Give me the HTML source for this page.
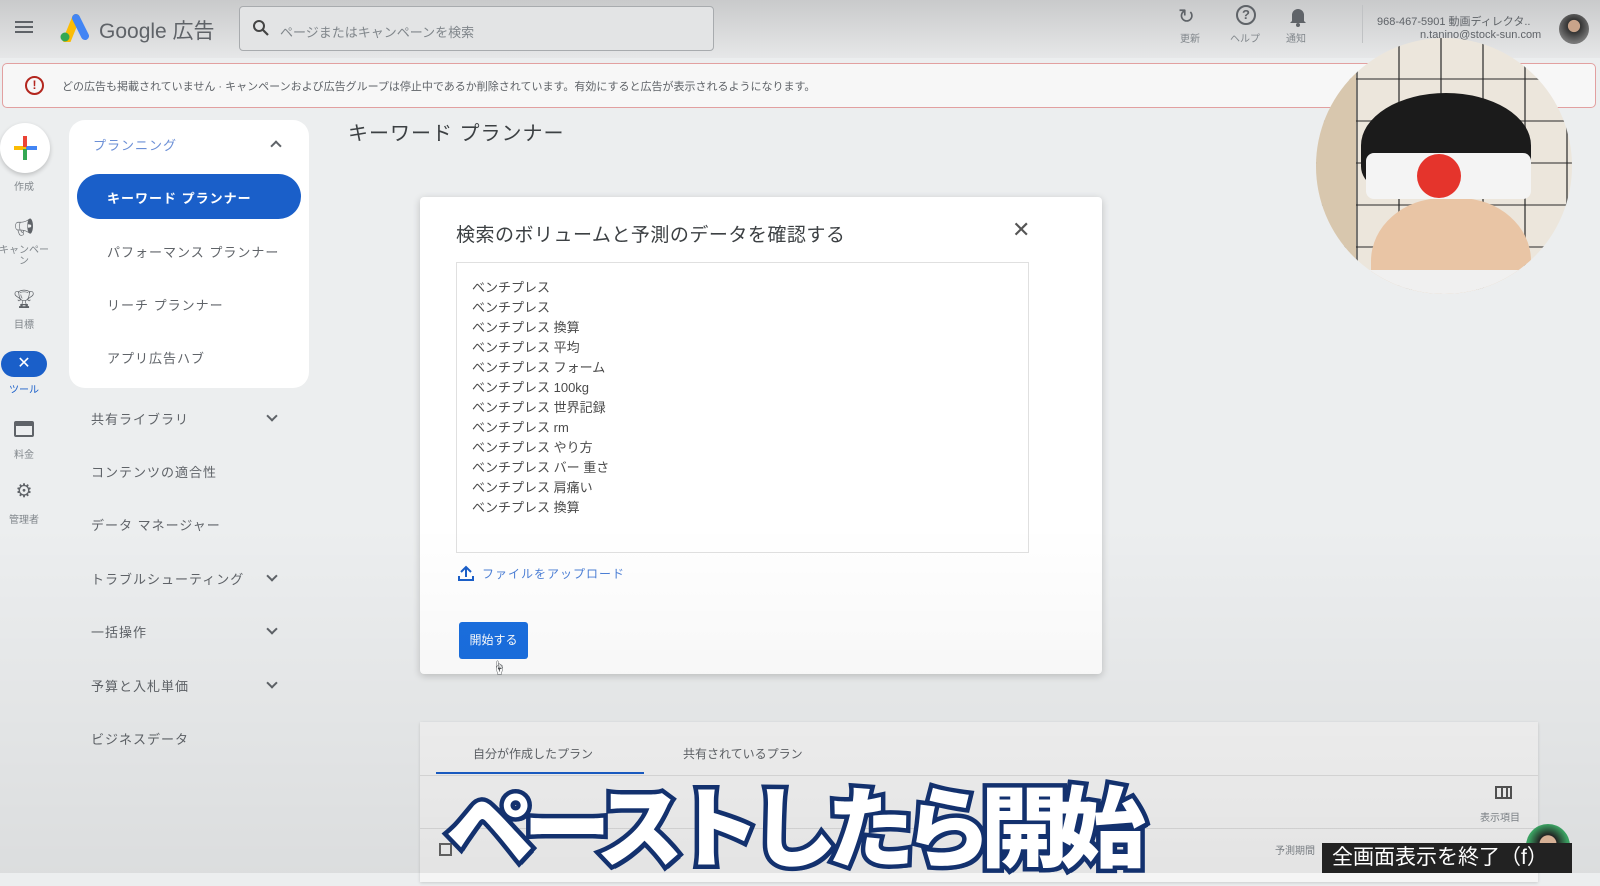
<!DOCTYPE html>
<html><head><meta charset="utf-8">
<style>
*{box-sizing:border-box;margin:0;padding:0}
body{width:1600px;height:873px;overflow:hidden;position:relative;background:#eceeef;font-family:"Liberation Sans","Noto Sans CJK JP",sans-serif;color:#3c4043}
.abs{position:absolute}
.hdr{left:0;top:0;width:1600px;height:58px;background:linear-gradient(#c9cacb,#e6e7e8)}
.vign{left:0;top:0;width:1600px;height:873px;background:linear-gradient(180deg,rgba(0,0,0,0) 60%,rgba(0,0,0,.07) 100%);pointer-events:none}
.menu div{position:absolute;left:91px;font-size:13px;color:#5f6368;letter-spacing:1px}
.chev{position:absolute;left:268px;width:8px;height:8px;border-right:2px solid #5f6368;border-bottom:2px solid #5f6368;transform:rotate(45deg)}
.rail{position:absolute;width:48px;text-align:center;font-size:10px;color:#80868b}
.kw{font-size:13px;color:#4a4a4a;line-height:20px}
</style></head><body>
<div class="abs hdr"></div>
<div class="abs" style="left:15px;top:21px;width:18px;height:2px;background:#5f6368;box-shadow:0 5px 0 #5f6368,0 10px 0 #5f6368"></div>
<svg class="abs" style="left:57px;top:14px" width="32" height="28" viewBox="0 0 32 28"><path d="M10 26 L19 4" stroke="#fbbc04" stroke-width="8" stroke-linecap="round"/><path d="M19 4 L28 22" stroke="#4285f4" stroke-width="8" stroke-linecap="round"/><circle cx="8" cy="23" r="4.5" fill="#34a853"/></svg>
<div class="abs" style="left:99px;top:15px;font-size:21px;color:#5f6368">Google 広告</div>
<div class="abs" style="left:239px;top:6px;width:475px;height:45px;border:1.5px solid #a8abae;border-radius:4px;background:#e3e4e5"></div>
<svg class="abs" style="left:252px;top:19px" width="18" height="18" viewBox="0 0 18 18"><circle cx="7" cy="7" r="5" fill="none" stroke="#444" stroke-width="2"/><path d="M11 11l5 5" stroke="#444" stroke-width="2.2"/></svg>
<div class="abs" style="left:280px;top:22px;font-size:13px;color:#80868b">ページまたはキャンペーンを検索</div>
<div class="abs" style="left:1178px;top:4px;font-size:20px;color:#5f6368">↻</div>
<div class="abs" style="left:1180px;top:30px;font-size:10px;color:#80868b">更新</div>
<div class="abs" style="left:1236px;top:5px;width:20px;height:20px;border:2px solid #5f6368;border-radius:50%;font-size:13px;text-align:center;line-height:16px;color:#5f6368;font-weight:bold">?</div>
<div class="abs" style="left:1230px;top:30px;font-size:10px;color:#80868b">ヘルプ</div>
<svg class="abs" style="left:1288px;top:5px" width="20" height="22" viewBox="0 0 20 22"><path d="M4 16V10a6 6 0 0112 0v6l2 2H2z" fill="#5f6368"/><circle cx="10" cy="20" r="2" fill="#5f6368"/></svg>
<div class="abs" style="left:1286px;top:30px;font-size:10px;color:#80868b">通知</div>
<div class="abs" style="left:1362px;top:5px;width:1px;height:38px;background:#c0c2c4"></div>
<div class="abs" style="left:1377px;top:13px;font-size:11px;color:#5f6368">968-467-5901 動画ディレクタ..</div>
<div class="abs" style="left:1420px;top:29px;font-size:11px;color:#5f6368">n.tanino@stock-sun.com</div>
<div class="abs" style="left:1559px;top:14px;width:30px;height:30px;border-radius:50%;background:radial-gradient(circle at 50% 40%,#c9a48a 25%,#333 27%,#777 70%)"></div>
<div class="abs" style="left:2px;top:63px;width:1594px;height:45px;border:1.5px solid #e2a0a0;border-radius:5px;background:#f7f7f7"></div>
<div class="abs" style="left:25px;top:76px;width:19px;height:19px;border:2px solid #b3261e;border-radius:50%;color:#b3261e;font-size:12px;font-weight:bold;text-align:center;line-height:15px">!</div>
<div class="abs" style="left:62px;top:78px;font-size:11px;color:#5f6368">どの広告も掲載されていません · キャンペーンおよび広告グループは停止中であるか削除されています。有効にすると広告が表示されるようになります。</div>
<div class="abs" style="left:0;top:123px;width:50px;height:50px;border-radius:50%;background:#fff;box-shadow:0 2px 5px rgba(0,0,0,.2)"></div>
<div class="abs" style="left:14px;top:146px;width:12px;height:4px;background:#fbbc04"></div><div class="abs" style="left:26px;top:146px;width:11px;height:4px;background:#4285f4"></div>
<div class="abs" style="left:23px;top:136px;width:4px;height:11px;background:#ea4335"></div><div class="abs" style="left:23px;top:149px;width:4px;height:11px;background:#34a853"></div>
<div class="rail" style="left:0;top:178px">作成</div>
<div class="rail" style="left:0;top:218px;font-size:17px;color:#5f6368">📢︎</div>
<div class="rail" style="left:-4px;top:245px;width:56px;line-height:11px">キャンペーン</div>
<div class="rail" style="left:0;top:289px;font-size:18px;color:#5f6368">🏆︎</div>
<div class="rail" style="left:0;top:316px">目標</div>
<div class="abs" style="left:1px;top:351px;width:46px;height:26px;border-radius:13px;background:#1a5fc9;color:#fff;text-align:center;font-size:16px;line-height:26px">✕</div>
<div class="rail" style="left:0;top:381px;color:#1a5fc9">ツール</div>
<div class="abs" style="left:14px;top:421px;width:20px;height:16px;border:2px solid #5f6368;border-radius:2px;border-top-width:5px"></div>
<div class="rail" style="left:0;top:446px">料金</div>
<div class="rail" style="left:0;top:480px;font-size:19px;color:#5f6368">⚙</div>
<div class="rail" style="left:0;top:511px">管理者</div>
<div class="abs" style="left:69px;top:120px;width:240px;height:268px;background:#fff;border-radius:16px"></div>
<div class="abs" style="left:93px;top:135px;font-size:13px;color:#6b8fd6;letter-spacing:1px">プランニング</div>
<div class="abs" style="left:272px;top:142px;width:8px;height:8px;border-left:2px solid #5f6368;border-top:2px solid #5f6368;transform:rotate(45deg)"></div>
<div class="abs" style="left:77px;top:174px;width:224px;height:45px;border-radius:23px;background:#1a5fc9"></div>
<div class="abs" style="left:107px;top:188px;font-size:13px;color:#fff;letter-spacing:1px;font-weight:bold">キーワード プランナー</div>
<div class="menu">
<div style="left:107px;top:242px">パフォーマンス プランナー</div>
<div style="left:107px;top:295px">リーチ プランナー</div>
<div style="left:107px;top:348px">アプリ広告ハブ</div>
<div style="top:409px">共有ライブラリ</div>
<div style="top:462px">コンテンツの適合性</div>
<div style="top:515px">データ マネージャー</div>
<div style="top:569px">トラブルシューティング</div>
<div style="top:622px">一括操作</div>
<div style="top:676px">予算と入札単価</div>
<div style="top:729px">ビジネスデータ</div>
</div>
<div class="chev" style="top:412px"></div><div class="chev" style="top:572px"></div><div class="chev" style="top:625px"></div><div class="chev" style="top:679px"></div>
<div class="abs" style="left:348px;top:117px;font-size:20px;color:#3c4043;letter-spacing:1px">キーワード プランナー</div>
<div class="abs" style="left:420px;top:197px;width:682px;height:477px;background:#fff;border-radius:4px;box-shadow:0 2px 8px rgba(0,0,0,.2)"></div>
<div class="abs" style="left:456px;top:220px;font-size:19px;color:#3c4043;letter-spacing:.5px">検索のボリュームと予測のデータを確認する</div>
<div class="abs" style="left:1012px;top:217px;font-size:22px;color:#555">✕</div>
<div class="abs" style="left:456px;top:262px;width:573px;height:291px;border:1px solid #e0e0e0;background:#fff"></div>
<div class="abs kw" style="left:472px;top:278px">ベンチプレス<br>ベンチプレス<br>ベンチプレス 換算<br>ベンチプレス 平均<br>ベンチプレス フォーム<br>ベンチプレス 100kg<br>ベンチプレス 世界記録<br>ベンチプレス rm<br>ベンチプレス やり方<br>ベンチプレス バー 重さ<br>ベンチプレス 肩痛い<br>ベンチプレス 換算</div>
<svg class="abs" style="left:458px;top:564px" width="16" height="18" viewBox="0 0 16 18"><path d="M8 13V3M3 8l5-5 5 5M1 12v4h14v-4" fill="none" stroke="#1a5fc9" stroke-width="2"/></svg>
<div class="abs" style="left:482px;top:565px;font-size:12px;color:#4c7fd6;letter-spacing:1px">ファイルをアップロード</div>
<div class="abs" style="left:459px;top:622px;width:69px;height:37px;background:#1a6fe0;border-radius:3px;color:#fff;font-size:12px;text-align:center;line-height:37px">開始する</div>
<div class="abs" style="left:492px;top:658px;font-size:14px">☝</div>
<div class="abs" style="left:1316px;top:38px;width:256px;height:256px;border-radius:50%;overflow:hidden;background:#ece6dc">
<div class="abs" style="left:0;top:0;width:256px;height:256px;background:repeating-linear-gradient(90deg,transparent 0 40px,rgba(40,40,40,.6) 40px 42px)"></div>
<div class="abs" style="left:0;top:0;width:256px;height:256px;background:repeating-linear-gradient(180deg,transparent 0 40px,rgba(40,40,40,.5) 40px 42px)"></div>
<div class="abs" style="left:0;top:0;width:40px;height:256px;background:#d8c7ae"></div>
<div class="abs" style="left:55px;top:160px;width:160px;height:140px;border-radius:45%;background:#e9c5a5"></div>
<div class="abs" style="left:45px;top:55px;width:170px;height:105px;border-radius:50% 50% 30% 30%;background:#1b1b1b"></div>
<div class="abs" style="left:50px;top:115px;width:165px;height:46px;background:#f4f4f4;border-radius:8px"></div>
<div class="abs" style="left:101px;top:116px;width:44px;height:44px;border-radius:50%;background:#e5342c"></div>
<div class="abs" style="left:0;top:232px;width:256px;height:30px;background:#f0f0f0"></div>
</div>
<div class="abs" style="left:420px;top:722px;width:1118px;height:160px;background:#f5f5f5;box-shadow:0 1px 3px rgba(0,0,0,.15)"></div>
<div class="abs" style="left:473px;top:745px;font-size:12px;color:#5f6368">自分が作成したプラン</div>
<div class="abs" style="left:683px;top:745px;font-size:12px;color:#5f6368">共有されているプラン</div>
<div class="abs" style="left:436px;top:772px;width:208px;height:2px;background:#1a5fc9"></div>
<div class="abs" style="left:420px;top:775px;width:1118px;height:1px;background:#ddd"></div>
<div class="abs" style="left:420px;top:828px;width:1118px;height:1px;background:#ddd"></div>
<div class="abs" style="left:1495px;top:786px;width:17px;height:13px;border:2px solid #555;background:linear-gradient(90deg,transparent 4px,#555 4px 6px,transparent 6px 9px,#555 9px 11px,transparent 11px)"></div>
<div class="abs" style="left:1480px;top:809px;font-size:10px;color:#80868b">表示項目</div>
<div class="abs" style="left:439px;top:843px;width:13px;height:13px;border:2px solid #666"></div>
<div class="abs" style="left:1275px;top:842px;font-size:10px;color:#80868b">予測期間</div>
<div class="abs vign"></div>
<div class="abs" style="left:446px;top:773px;font-size:88px;line-height:100px;font-weight:900;color:#fff;-webkit-text-stroke:9px #13316e;paint-order:stroke fill;letter-spacing:-11px;white-space:nowrap;font-family:'Noto Sans CJK JP',sans-serif;text-shadow:3px 4px 0 #13316e">ペーストしたら開始</div>
<div class="abs" style="left:1526px;top:824px;width:44px;height:44px;border-radius:50%;background:radial-gradient(circle at 50% 45%,#d6b196 25%,#222 27%,#3aa061 60%)"></div>
<div class="abs" style="left:1322px;top:843px;width:250px;height:30px;background:#222;color:#fff;font-size:21px;line-height:30px;padding-left:10px;white-space:nowrap">全画面表示を終了（f）</div>
</body></html>
